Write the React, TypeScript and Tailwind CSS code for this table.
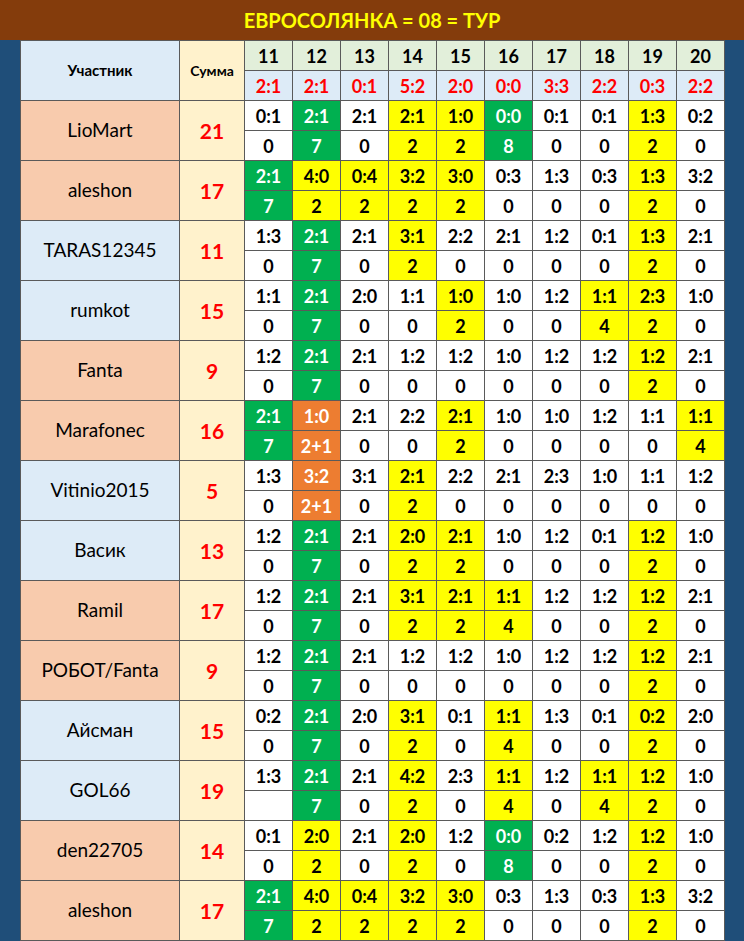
import React from "react";

type C = "w" | "g" | "y" | "o";
type Row = { name: string; sum: number; bg: "p" | "b"; s: string[]; p: string[]; c: C[] };

const HEAD_RES = ["2:1", "2:1", "0:1", "5:2", "2:0", "0:0", "3:3", "2:2", "0:3", "2:2"];

const aleshon: Omit<Row, "name" | "sum" | "bg"> = {
  s: ["2:1", "4:0", "0:4", "3:2", "3:0", "0:3", "1:3", "0:3", "1:3", "3:2"],
  p: ["7", "2", "2", "2", "2", "0", "0", "0", "2", "0"],
  c: ["g", "y", "y", "y", "y", "w", "w", "w", "y", "w"],
};

const ROWS: Row[] = [
  {
    name: "LioMart", sum: 21, bg: "p",
    s: ["0:1", "2:1", "2:1", "2:1", "1:0", "0:0", "0:1", "0:1", "1:3", "0:2"],
    p: ["0", "7", "0", "2", "2", "8", "0", "0", "2", "0"],
    c: ["w", "g", "w", "y", "y", "g", "w", "w", "y", "w"],
  },
  { name: "aleshon", sum: 17, bg: "p", ...aleshon },
  {
    name: "TARAS12345", sum: 11, bg: "b",
    s: ["1:3", "2:1", "2:1", "3:1", "2:2", "2:1", "1:2", "0:1", "1:3", "2:1"],
    p: ["0", "7", "0", "2", "0", "0", "0", "0", "2", "0"],
    c: ["w", "g", "w", "y", "w", "w", "w", "w", "y", "w"],
  },
  {
    name: "rumkot", sum: 15, bg: "b",
    s: ["1:1", "2:1", "2:0", "1:1", "1:0", "1:0", "1:2", "1:1", "2:3", "1:0"],
    p: ["0", "7", "0", "0", "2", "0", "0", "4", "2", "0"],
    c: ["w", "g", "w", "w", "y", "w", "w", "y", "y", "w"],
  },
  {
    name: "Fanta", sum: 9, bg: "p",
    s: ["1:2", "2:1", "2:1", "1:2", "1:2", "1:0", "1:2", "1:2", "1:2", "2:1"],
    p: ["0", "7", "0", "0", "0", "0", "0", "0", "2", "0"],
    c: ["w", "g", "w", "w", "w", "w", "w", "w", "y", "w"],
  },
  {
    name: "Marafonec", sum: 16, bg: "p",
    s: ["2:1", "1:0", "2:1", "2:2", "2:1", "1:0", "1:0", "1:2", "1:1", "1:1"],
    p: ["7", "2+1", "0", "0", "2", "0", "0", "0", "0", "4"],
    c: ["g", "o", "w", "w", "y", "w", "w", "w", "w", "y"],
  },
  {
    name: "Vitinio2015", sum: 5, bg: "b",
    s: ["1:3", "3:2", "3:1", "2:1", "2:2", "2:1", "2:3", "1:0", "1:1", "1:2"],
    p: ["0", "2+1", "0", "2", "0", "0", "0", "0", "0", "0"],
    c: ["w", "o", "w", "y", "w", "w", "w", "w", "w", "w"],
  },
  {
    name: "Васик", sum: 13, bg: "b",
    s: ["1:2", "2:1", "2:1", "2:0", "2:1", "1:0", "1:2", "0:1", "1:2", "1:0"],
    p: ["0", "7", "0", "2", "2", "0", "0", "0", "2", "0"],
    c: ["w", "g", "w", "y", "y", "w", "w", "w", "y", "w"],
  },
  {
    name: "Ramil", sum: 17, bg: "p",
    s: ["1:2", "2:1", "2:1", "3:1", "2:1", "1:1", "1:2", "1:2", "1:2", "2:1"],
    p: ["0", "7", "0", "2", "2", "4", "0", "0", "2", "0"],
    c: ["w", "g", "w", "y", "y", "y", "w", "w", "y", "w"],
  },
  {
    name: "РОБОТ/Fanta", sum: 9, bg: "p",
    s: ["1:2", "2:1", "2:1", "1:2", "1:2", "1:0", "1:2", "1:2", "1:2", "2:1"],
    p: ["0", "7", "0", "0", "0", "0", "0", "0", "2", "0"],
    c: ["w", "g", "w", "w", "w", "w", "w", "w", "y", "w"],
  },
  {
    name: "Айсман", sum: 15, bg: "b",
    s: ["0:2", "2:1", "2:0", "3:1", "0:1", "1:1", "1:3", "0:1", "0:2", "2:0"],
    p: ["0", "7", "0", "2", "0", "4", "0", "0", "2", "0"],
    c: ["w", "g", "w", "y", "w", "y", "w", "w", "y", "w"],
  },
  {
    name: "GOL66", sum: 19, bg: "b",
    s: ["1:3", "2:1", "2:1", "4:2", "2:3", "1:1", "1:2", "1:1", "1:2", "1:0"],
    p: ["", "7", "0", "2", "0", "4", "0", "4", "2", "0"],
    c: ["w", "g", "w", "y", "w", "y", "w", "y", "y", "w"],
  },
  {
    name: "den22705", sum: 14, bg: "p",
    s: ["0:1", "2:0", "2:1", "2:0", "1:2", "0:0", "0:2", "1:2", "1:2", "1:0"],
    p: ["0", "2", "0", "2", "0", "8", "0", "0", "2", "0"],
    c: ["w", "y", "w", "y", "w", "g", "w", "w", "y", "w"],
  },
  { name: "aleshon", sum: 17, bg: "p", ...aleshon },
];

const cellColor: Record<C, string> = {
  w: "bg-white text-black",
  g: "bg-[#00b050] text-white",
  y: "bg-[#ffff00] text-black",
  o: "bg-[#ed7d31] text-white",
};

const bd = "border-r border-b border-[#5a5a5a]";

function Cell({ v, c }: { v: string; c: C }) {
  return (
    <div className={`${bd} ${cellColor[c]} h-[30px] flex items-center justify-center text-[18px] font-bold leading-none`}>
      {v}
    </div>
  );
}

export default function App() {
  return (
    <div className="w-[744px] h-[941px] bg-[#1f4e79] flex flex-col overflow-hidden font-[Lato,Roboto,'Liberation_Sans',sans-serif]">
      <div className="h-10 shrink-0 bg-[#843c0c] flex items-center justify-center text-[#ffff00] font-bold text-[20px] leading-none">
        ЕВРОСОЛЯНКА = 08 = ТУР
      </div>
      <div className="pl-5">
        <div className="grid grid-cols-[160px_65px_repeat(10,48px)] border-t border-[#5a5a5a] w-fit">
          <div className={`${bd} border-l row-span-2 bg-[#ddebf7] flex items-center justify-center text-[15px] font-bold text-black`}>
            Участник
          </div>
          <div className={`${bd} row-span-2 bg-[#fff2cc] flex items-center justify-center text-[14px] font-bold text-black`}>
            Сумма
          </div>
          {Array.from({ length: 10 }, (_, i) => (
            <div key={`n${i}`} className={`${bd} h-[30px] bg-[#e2efda] flex items-center justify-center text-[18px] font-bold text-black leading-none`}>
              {11 + i}
            </div>
          ))}
          {HEAD_RES.map((r, i) => (
            <div key={`r${i}`} className={`${bd} h-[30px] bg-[#ddebf7] flex items-center justify-center text-[18px] font-bold text-[#ff0000] leading-none`}>
              {r}
            </div>
          ))}
          {ROWS.map((row, ri) => (
            <React.Fragment key={ri}>
              <div className={`${bd} border-l row-span-2 ${row.bg === "p" ? "bg-[#f8cbad]" : "bg-[#ddebf7]"} flex items-center justify-center text-[19px] text-black`}>
                {row.name}
              </div>
              <div className={`${bd} row-span-2 bg-[#fff2cc] flex items-center justify-center text-[21px] font-bold text-[#ff0000]`}>
                {row.sum}
              </div>
              {row.s.map((v, i) => (
                <Cell key={`s${i}`} v={v} c={row.c[i]} />
              ))}
              {row.p.map((v, i) => (
                <Cell key={`p${i}`} v={v} c={row.c[i]} />
              ))}
            </React.Fragment>
          ))}
        </div>
      </div>
    </div>
  );
}
